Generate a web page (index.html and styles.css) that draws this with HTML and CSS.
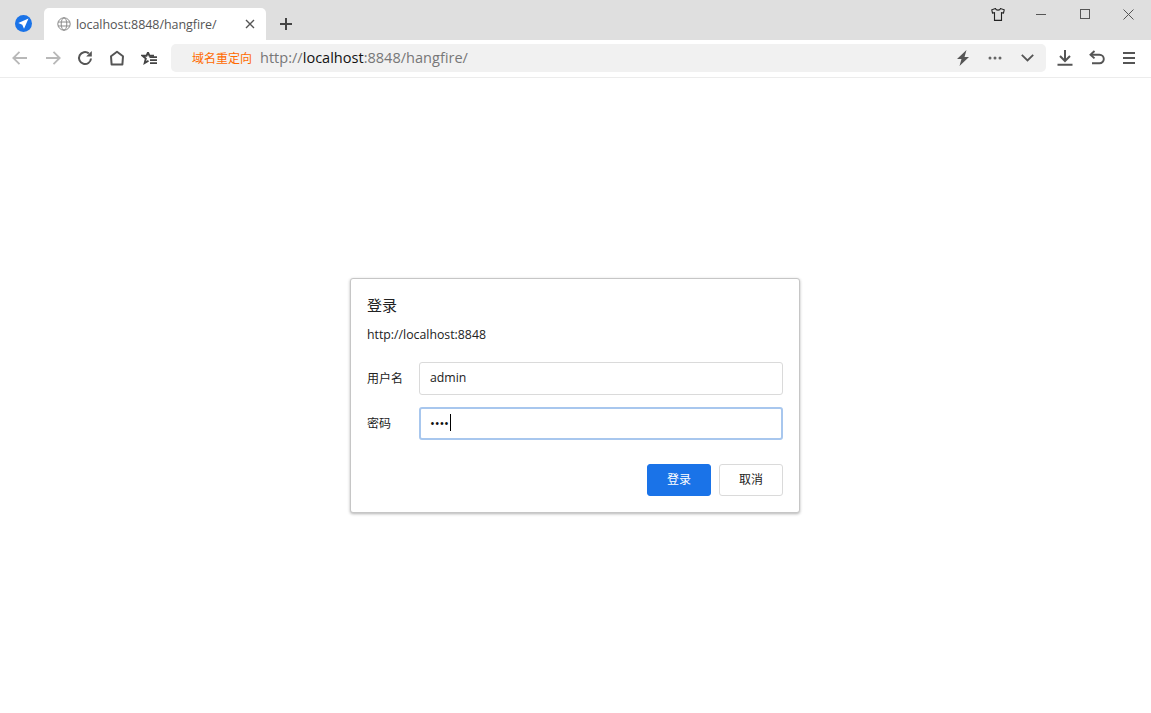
FILE: index.html
```html
<!DOCTYPE html>
<html lang="zh-CN">
<head>
<meta charset="utf-8">
<title>localhost:8848/hangfire/</title>
<link rel="stylesheet" href="styles.css">
</head>
<body>
<div class="browser">
  <header class="tabstrip">
    <div class="brand">
      <svg width="17" height="17" viewBox="0 0 17 17"><circle cx="8.5" cy="8.5" r="8.5" fill="#1a73e8"/><path d="M13.500 3.500 3.300 8 7.300 9.700 9 13.700Z" fill="#fff"/></svg>
    </div>
    <div class="tab">
      <svg class="globe" width="14" height="14" viewBox="0 0 14 14" fill="none" stroke="#8a8a8a" stroke-width="1"><circle cx="7" cy="7" r="6.2"/><ellipse cx="7" cy="7" rx="2.8" ry="6.2"/><path d="M1 5h12M1 9h12"/></svg>
      <span class="tab-title">localhost:8848/hangfire/</span>
      <svg class="tab-close" width="10" height="10" viewBox="0 0 10 10" fill="none" stroke="#555" stroke-width="1.4"><path d="M1 1l8 8M9 1l-8 8"/></svg>
    </div>
    <svg class="newtab" width="12" height="12" viewBox="0 0 12 12" fill="none" stroke="#444" stroke-width="2"><path d="M6 0v12M0 6h12"/></svg>
    <div class="winctl">
      <svg class="skin" width="14" height="13" viewBox="0 0 14 13" fill="none" stroke="#222" stroke-width="1.1"><path d="M4.500 .6 .8 1.800 1.500 5 3.500 4.600V12.400H10.500V4.600L12.500 5 13.200 1.800 9.500 .6C9 2.600 5 2.600 4.500 .6Z"/></svg>
      <svg class="min" width="10" height="1" viewBox="0 0 10 1"><path d="M0 .5h10" stroke="#555"/></svg>
      <svg class="max" width="10" height="10" viewBox="0 0 10 10" fill="none"><rect x=".5" y=".5" width="9" height="9" stroke="#555"/></svg>
      <svg class="close" width="11" height="11" viewBox="0 0 11 11" fill="none" stroke="#555"><path d="M.5.5l10 10M10.500.5l-10 10"/></svg>
    </div>
  </header>
  <nav class="toolbar">
    <div class="navbtns">
      <svg class="back" width="16" height="16" viewBox="0 0 16 16" fill="none" stroke="#b8b8b8" stroke-width="1.8"><path d="M15 8H1.500M7.500 1.800 1.300 8l6.200 6.200"/></svg>
      <svg width="16" height="16" viewBox="0 0 16 16" fill="none" stroke="#b8b8b8" stroke-width="1.800"><path d="M1 8h13.500M8.500 1.800 14.700 8l-6.200 6.200"/></svg>
      <svg width="16" height="16" viewBox="0 0 16 16" fill="none" stroke="#555" stroke-width="2"><path d="M14 8.500A6 6 0 1 1 11.800 3.400"/><path d="M14.800 1v5.600h-5.600z" fill="#555" stroke="none"/></svg>
      <svg width="16" height="16" viewBox="0 0 16 16" fill="none" stroke="#555" stroke-width="2"><path d="M8 1.800 2 6.300 2.600 14.500H13.400L14 6.300Z" stroke-linejoin="round"/></svg>
      <svg width="16" height="16" viewBox="0 0 16 16" fill="none" stroke="#444"><path d="M7 2.500 8.500 5.800H13M7 2.500 5.500 5.800H1.500L4.800 8.500 3.700 13 7.500 10.700" stroke-width="1.900"/><path d="M8.500 7.200h7.500M9 10.200h7M9 13.200h7" stroke-width="1.800"/></svg>
    </div>
    <div class="addressbar">
      <span class="redirect">域名重定向</span>
      <span class="url">http://<b class="host">localhost</b>:8848/hangfire/</span>
      <div class="addr-icons">
        <svg class="bolt" width="14" height="16" viewBox="0 0 14 16"><path d="M10.500 0 1 9H5.500L3.500 16 13 7H8.500Z" fill="#555"/></svg>
        <svg width="14" height="4" viewBox="0 0 14 4" fill="#666"><circle cx="2" cy="2" r="1.500"/><circle cx="7" cy="2" r="1.500"/><circle cx="12" cy="2" r="1.500"/></svg>
        <svg width="13" height="8" viewBox="0 0 13 8" fill="none" stroke="#555" stroke-width="1.800"><path d="M.8.800 6.500 6.500 12.200.8"/></svg>
      </div>
    </div>
    <div class="rightbtns">
      <svg width="16" height="16" viewBox="0 0 16 16" fill="none" stroke="#555" stroke-width="2"><path d="M8 0v10.500M3 6 8 11 13 6M.5 14.700h15"/></svg>
      <svg width="16" height="16" viewBox="0 0 16 16" fill="none" stroke="#555" stroke-width="1.900"><path d="M5.500 1 1.500 4.700 5.500 8.400"/><path d="M2 4.700H10.500A3.800 3.800 0 0 1 10.500 13.300H3"/></svg>
      <svg class="menu" width="12" height="12" viewBox="0 0 12 12" fill="none" stroke="#555" stroke-width="2"><path d="M0 1h12M0 6h12M0 11h12"/></svg>
    </div>
  </nav>
  <main class="page">
    <form class="dialog">
      <h1 class="dialog-title">登录</h1>
      <p class="origin">http://localhost:8848</p>
      <div class="field">
        <label class="field-label">用户名</label>
        <div class="input">admin</div>
      </div>
      <div class="field">
        <label class="field-label">密码</label>
        <div class="input input-focus"><span class="dots">••••</span><span class="caret"></span></div>
      </div>
      <div class="actions">
        <button type="button" class="btn btn-primary">登录</button>
        <button type="button" class="btn">取消</button>
      </div>
    </form>
  </main>
</div>
</body>
</html>
```
FILE: styles.css
```css
* { box-sizing: border-box; }
html, body { margin: 0; height: 100%; }
body {
  font-family: "Open Sans", "Noto Sans CJK SC", sans-serif;
  background: #fff;
  color: #222;
  overflow: hidden;
}
.browser { display: flex; flex-direction: column; height: 100%; }

.tabstrip {
  display: flex;
  align-items: flex-end;
  height: 40px;
  background: #dfdfdf;
  flex: none;
}
.brand { width: 44px; height: 40px; display: flex; align-items: center; justify-content: center; padding: 6px 0 0 2px; }
.tab {
  width: 222px;
  height: 32px;
  background: #fff;
  border-radius: 5px 5px 0 0;
  display: flex;
  align-items: center;
  padding: 0 11px 0 13px;
}
.globe { flex: none; margin-right: 5px; }
.tab-title { font-size: 12.500px; color: #555; flex: 1; white-space: nowrap; letter-spacing: -.06px; }
.tab-close { flex: none; }
.newtab { margin: 0 0 10px 14px; flex: none; }
.winctl {
  margin-left: auto;
  align-self: flex-start;
  display: flex;
  align-items: center;
  height: 28px;
  padding-right: 17px;
}
.skin { margin-right: 31px; }
.min { margin-right: 34px; }
.max { margin-right: 33px; }

.toolbar {
  display: flex;
  align-items: center;
  height: 38px;
  border-bottom: 1px solid #ececec;
  flex: none;
  padding: 0 0 1px 12px;
}
.navbtns { display: flex; align-items: center; gap: 16px; width: 159px; flex: none; }
.back { margin-right: 1px; }
.addressbar {
  width: 875px;
  height: 28px;
  background: #f1f1f1;
  border-radius: 5px;
  display: flex;
  align-items: center;
  padding: 0 12px 0 21px;
  flex: none;
}
.redirect { font-size: 12px; color: #ff6a00; margin-right: 8px; white-space: nowrap; }
.url { font-size: 14.550px; color: #777; white-space: nowrap; margin-top: -2px; }
.host { font-weight: 400; color: #111; }
.addr-icons { margin-left: auto; display: flex; align-items: center; gap: 19px; }
.bolt { margin-right: -1px; }
.rightbtns { display: flex; align-items: center; gap: 16px; margin-left: 11px; flex: none; }
.menu { margin-left: 2px; }

.page { flex: 1; display: flex; align-items: center; justify-content: center; }
.dialog {
  width: 450px;
  height: 235px;
  border: 1px solid #c6c6c6;
  border-radius: 3px;
  background: #fff;
  box-shadow: 0 1px 3px rgba(0,0,0,.3);
  padding: 16px 16px 16px;
  display: flex;
  flex-direction: column;
  margin-right: 1px;
}
.dialog-title { margin: 0; font-size: 15px; font-weight: 400; line-height: 20px; color: #222; }
.origin { margin: 11px 0 18px; font-size: 12.300px; line-height: 18px; color: #222; }
.field { display: flex; align-items: center; height: 33px; margin-bottom: 12px; }
.field-label { width: 52px; flex: none; font-size: 12px; color: #222; margin-top: -2px; }
.input {
  flex: 1;
  height: 33px;
  border: 1px solid #dadada;
  border-radius: 3px;
  padding: 0 10px 2px;
  font-size: 12.300px;
  display: flex;
  align-items: center;
  color: #222;
}
.input-focus { border: 2px solid #a8c7ee; padding: 0 9px 2px; }
.dots { font-size: 13px; letter-spacing: -.2px; color: #111; }
.caret { width: 1px; height: 17px; background: #000; margin-left: 1px; }
.actions { display: flex; justify-content: flex-end; gap: 8px; margin-top: 12px; }
.btn {
  width: 64px;
  height: 32px;
  border: 1px solid #dadada;
  border-radius: 3px;
  background: #fff;
  font: inherit;
  font-size: 12px;
  color: #222;
  padding: 0 0 2px;
}
.btn-primary { background: #1a73e8; border-color: #1a73e8; color: #fff; }
```
